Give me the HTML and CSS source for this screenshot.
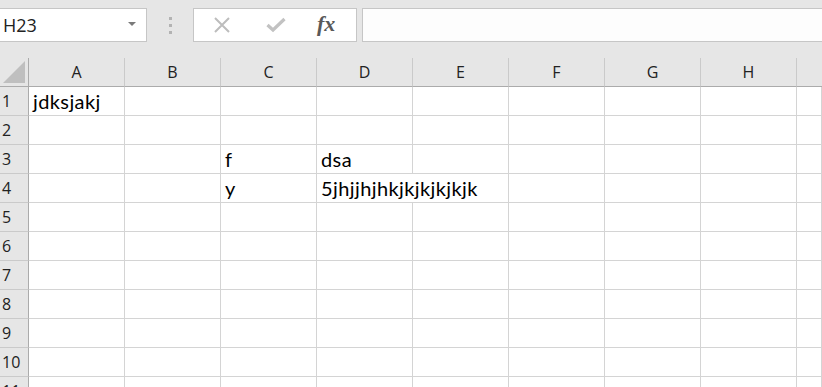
FILE: index.html
```html
<!DOCTYPE html>
<html lang="en">
<head>
    <meta charset="UTF-8">
    <title>Sheet</title>
    <link rel="stylesheet" href="styles.css">
</head>
<body>
    <div class="formula-bar">
        <div class="name-box">
            <span class="name-text">H23</span>
            <svg class="drop" width="8" height="5" viewBox="0 0 8 5"><polygon points="0,0 8,0 4,4" fill="#7a7a7a"/></svg>
        </div>
        <div class="grip"><span></span><span></span><span></span></div>
        <div class="fx-buttons">
            <svg class="btn-icon" width="18" height="18" viewBox="0 0 18 18"><path d="M2 2 L16 16 M16 2 L2 16" stroke="#bdbdbd" stroke-width="2" fill="none"/></svg>
            <svg class="btn-icon" width="20" height="16" viewBox="0 0 20 16"><path d="M1.5 8 L7 13 L18.5 2" stroke="#c2c2c2" stroke-width="3.2" fill="none"/></svg>
            <span class="fx">fx</span>
        </div>
        <div class="formula-input"></div>
    </div>

    <div class="sheet">
        <div class="corner"><svg width="22" height="22" viewBox="0 0 22 22"><polygon points="22,0 22,22 0,22" fill="#bfbfbf"/></svg></div>
        <div class="col-head">A</div>
        <div class="col-head">B</div>
        <div class="col-head">C</div>
        <div class="col-head">D</div>
        <div class="col-head">E</div>
        <div class="col-head">F</div>
        <div class="col-head">G</div>
        <div class="col-head">H</div>
        <div class="col-head last"></div>

        <div class="row-head">1</div>
        <div class="cell">jdksjakj</div><div class="cell"></div><div class="cell"></div><div class="cell"></div><div class="cell"></div><div class="cell"></div><div class="cell"></div><div class="cell"></div><div class="cell"></div>

        <div class="row-head">2</div>
        <div class="cell"></div><div class="cell"></div><div class="cell"></div><div class="cell"></div><div class="cell"></div><div class="cell"></div><div class="cell"></div><div class="cell"></div><div class="cell"></div>

        <div class="row-head">3</div>
        <div class="cell"></div><div class="cell"></div><div class="cell">f</div><div class="cell">dsa</div><div class="cell"></div><div class="cell"></div><div class="cell"></div><div class="cell"></div><div class="cell"></div>

        <div class="row-head">4</div>
        <div class="cell"></div><div class="cell"></div><div class="cell">y</div><div class="cell spill">5jhjjhjhkjkjkjkjkjk</div><div class="cell"></div><div class="cell"></div><div class="cell"></div><div class="cell"></div><div class="cell"></div>

        <div class="row-head">5</div>
        <div class="cell"></div><div class="cell"></div><div class="cell"></div><div class="cell"></div><div class="cell"></div><div class="cell"></div><div class="cell"></div><div class="cell"></div><div class="cell"></div>

        <div class="row-head">6</div>
        <div class="cell"></div><div class="cell"></div><div class="cell"></div><div class="cell"></div><div class="cell"></div><div class="cell"></div><div class="cell"></div><div class="cell"></div><div class="cell"></div>

        <div class="row-head">7</div>
        <div class="cell"></div><div class="cell"></div><div class="cell"></div><div class="cell"></div><div class="cell"></div><div class="cell"></div><div class="cell"></div><div class="cell"></div><div class="cell"></div>

        <div class="row-head">8</div>
        <div class="cell"></div><div class="cell"></div><div class="cell"></div><div class="cell"></div><div class="cell"></div><div class="cell"></div><div class="cell"></div><div class="cell"></div><div class="cell"></div>

        <div class="row-head">9</div>
        <div class="cell"></div><div class="cell"></div><div class="cell"></div><div class="cell"></div><div class="cell"></div><div class="cell"></div><div class="cell"></div><div class="cell"></div><div class="cell"></div>

        <div class="row-head">10</div>
        <div class="cell"></div><div class="cell"></div><div class="cell"></div><div class="cell"></div><div class="cell"></div><div class="cell"></div><div class="cell"></div><div class="cell"></div><div class="cell"></div>

        <div class="row-head">11</div>
        <div class="cell"></div><div class="cell"></div><div class="cell"></div><div class="cell"></div><div class="cell"></div><div class="cell"></div><div class="cell"></div><div class="cell"></div><div class="cell"></div>
    </div>
</body>
</html>
```

FILE: styles.css
```css
body {
    margin: 0;
    background-color: #e6e6e6;
    font-family: "Open Sans", "Noto Sans", sans-serif;
    width: 822px;
    height: 387px;
    overflow: hidden;
}
.formula-bar {
    display: flex;
    align-items: stretch;
    height: 34px;
    padding-top: 8px;
    padding-bottom: 16px;
}
.name-box {
    width: 147px;
    box-sizing: border-box;
    background: #fff;
    border: 1px solid #c6c6c6;
    border-left: none;
    display: flex;
    align-items: center;
    justify-content: space-between;
    padding: 0 10px 0 3px;
}
.name-text {
    font-size: 18px;
    color: #222;
}
.drop {
    margin-top: -1px;
}
.grip {
    width: 46px;
    display: flex;
    flex-direction: column;
    align-items: center;
    justify-content: center;
    gap: 4px;
}
.grip span {
    width: 3px;
    height: 3px;
    background: #b3b3b3;
}
.fx-buttons {
    width: 164px;
    box-sizing: border-box;
    background: #fff;
    border: 1px solid #c6c6c6;
    display: flex;
    align-items: center;
    padding-left: 19px;
    gap: 35px;
}
.fx {
    font-family: "Liberation Serif", "DejaVu Serif", serif;
    font-style: italic;
    font-weight: bold;
    font-size: 22px;
    color: #595959;
    margin-left: -4px;
    margin-top: -3px;
}
.formula-input {
    flex: 1;
    margin-left: 5px;
    background: #fdfdfd;
    border: 1px solid #c6c6c6;
    border-right: none;
}
.sheet {
    display: grid;
    grid-template-columns: 29px repeat(8, 96px) 1fr;
    grid-auto-rows: 29px;
    background: #fff;
}
.corner {
    background: #e6e6e6;
    border-right: 1px solid #ababab;
    border-bottom: 1px solid #ababab;
    box-sizing: border-box;
    display: flex;
    align-items: flex-end;
    justify-content: flex-end;
    padding: 0 3px 3px 0;
}
.col-head {
    background: #e6e6e6;
    border-right: 1px solid #cacaca;
    border-bottom: 1px solid #ababab;
    box-sizing: border-box;
    display: flex;
    align-items: center;
    justify-content: center;
    font-size: 16px;
    color: #222;
}
.col-head.last {
    border-right: none;
}
.row-head {
    background: #e6e6e6;
    border-right: 1px solid #ababab;
    border-bottom: 1px solid #cacaca;
    box-sizing: border-box;
    display: flex;
    align-items: center;
    padding-left: 2px;
    font-size: 16px;
    color: #222;
}
.cell {
    border-right: 1px solid #d4d4d4;
    border-bottom: 1px solid #d4d4d4;
    box-sizing: border-box;
    font-family: "Lato", "Open Sans", sans-serif;
    font-size: 20px;
    letter-spacing: 0.4px;
    color: #000;
    padding: 4px 0 0 4px;
    white-space: nowrap;
    line-height: 21px;
}
.cell.spill {
    border-right: none;
}
```
